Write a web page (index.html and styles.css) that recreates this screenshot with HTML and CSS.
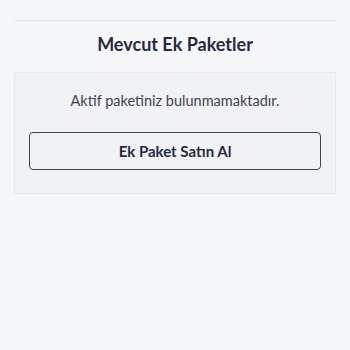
FILE: index.html
```html
<!DOCTYPE html>
<html lang="tr">
<head>
  <meta charset="UTF-8" />
  <meta name="viewport" content="width=device-width, initial-scale=1.0"/>
  <title>Ek Paketler</title>
  <link rel="stylesheet" href="styles.css">
</head>
<body>

  <div class="packages">
    <h2 class="packages-title">Mevcut Ek Paketler</h2>

    <div class="packages-card">
      <p class="empty-text">Aktif paketiniz bulunmamaktadır.</p>
      <button class="buy-btn" type="button">Ek Paket Satın Al</button>
    </div>
  </div>

</body>
</html>
```

FILE: styles.css
```css
body {
  font-family: 'Lato', 'Noto Sans', sans-serif;
  background: #f6f7f9;
  margin: 0;
}

.packages {
  margin: 20px 14px 0;
  border-top: 1px solid #e4e7ec;
}

.packages-title {
  margin: 0;
  padding: 12px 0 0;
  height: 39px;
  text-align: center;
  font-size: 18px;
  font-weight: 700;
  color: #262a40;
  line-height: 22px;
}

.packages-card {
  background: #f0f2f5;
  border: 1px solid #e6e8ec;
  padding: 18px 14px 23px;
}

.empty-text {
  margin: 0 0 21px;
  text-align: center;
  font-size: 14.5px;
  line-height: 20px;
  color: #3e4350;
}

.buy-btn {
  display: block;
  width: 100%;
  height: 38px;
  font-family: inherit;
  font-size: 15px;
  font-weight: 700;
  color: #1f2c44;
  background: transparent;
  border: 1px solid #3a4659;
  border-radius: 4px;
  cursor: pointer;
}
```
